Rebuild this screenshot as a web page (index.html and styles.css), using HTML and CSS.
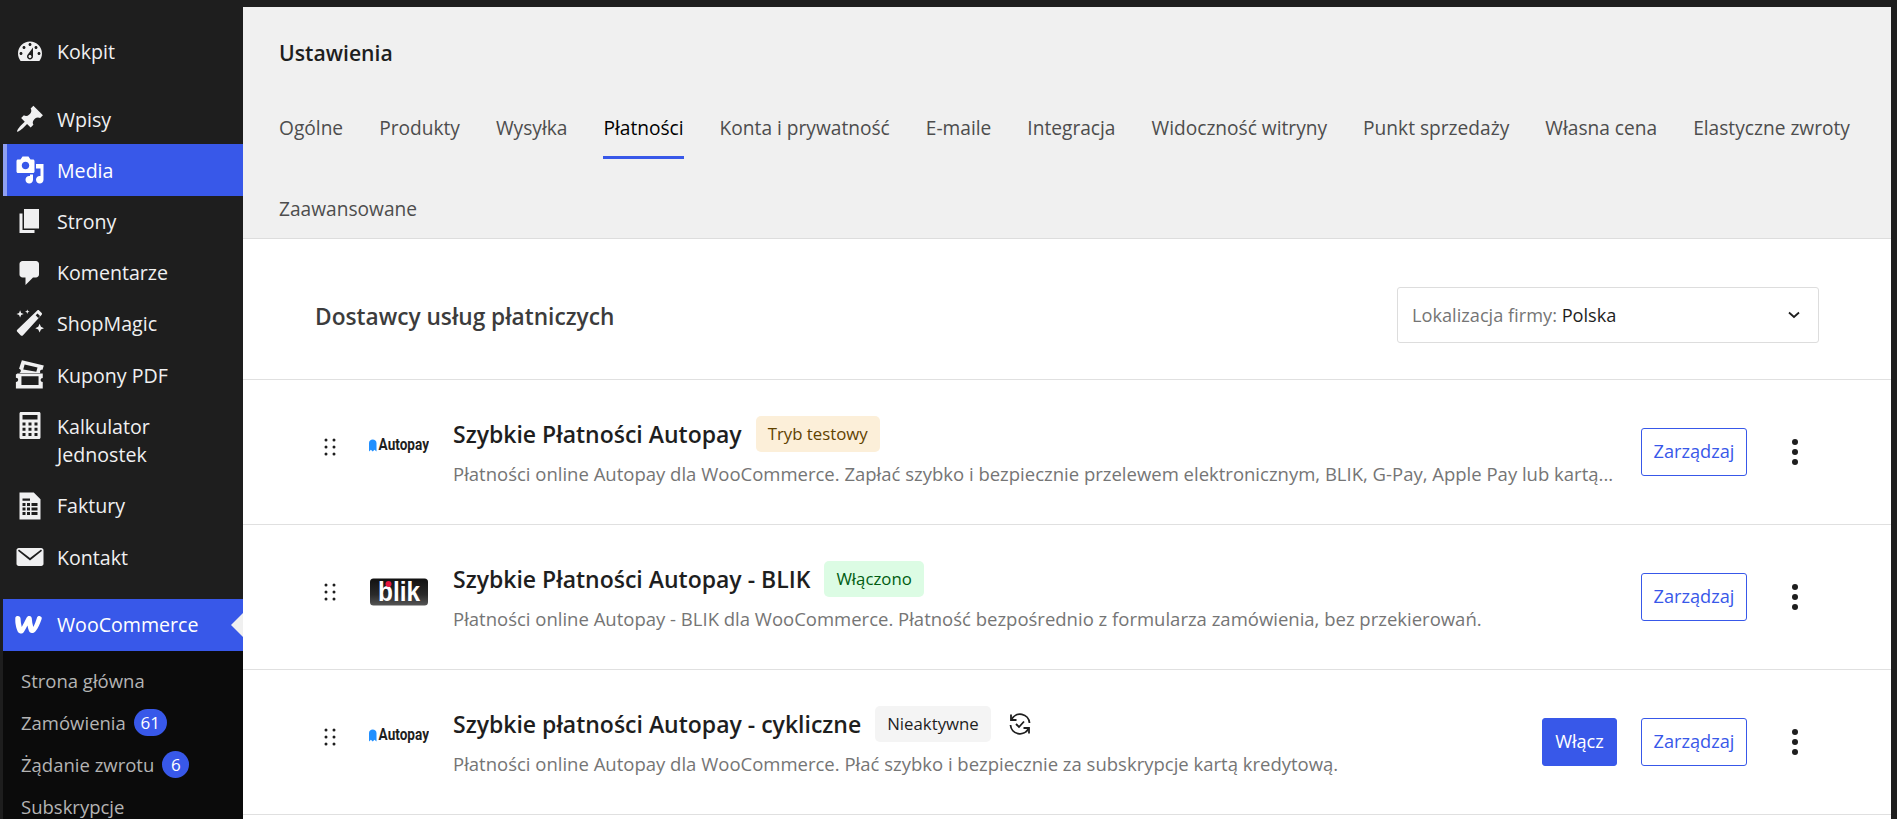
FILE: index.html
```html
<!DOCTYPE html>
<html lang="pl">
<head>
    <meta charset="UTF-8">
    <title>Ustawienia</title>
    <link rel="stylesheet" href="styles.css">
</head>
<body>
<div class="app">
    <div class="sidebar">
        <ul class="menu">
            <li class="item first">
                <svg class="ico" viewBox="0 0 20 20"><path d="M3.76 16h12.48c1.1-1.37 1.76-3.11 1.76-5 0-4.42-3.58-8-8-8s-8 3.58-8 8c0 1.89.66 3.63 1.76 5zM10 4c.55 0 1 .45 1 1s-.45 1-1 1-1-.45-1-1 .45-1 1-1zM6 6c.55 0 1 .45 1 1s-.45 1-1 1-1-.45-1-1 .45-1 1-1zm8 0c.55 0 1 .45 1 1s-.45 1-1 1-1-.45-1-1 .45-1 1-1zm-5.37 5.55L12 7v6c0 1.1-.9 2-2 2s-2-.9-2-2c0-.57.24-1.08.63-1.45zM4 10c.55 0 1 .45 1 1s-.45 1-1 1-1-.45-1-1 .45-1 1-1zm12 0c.55 0 1 .45 1 1s-.45 1-1 1-1-.45-1-1 .45-1 1-1zm-5 3c0-.55-.45-1-1-1s-1 .45-1 1 .45 1 1 1 1-.45 1-1z"/></svg>
                <span>Kokpit</span>
            </li>
            <li class="item sep">
                <svg class="ico" viewBox="0 0 20 20"><path d="M10.44 3.02l1.82-1.82 6.36 6.35-1.83 1.82c-1.05-.68-2.48-.57-3.41.36l-.75.75c-.92.93-1.04 2.35-.35 3.41l-1.83 1.82-2.41-2.41-2.8 2.79c-.42.42-3.38 2.71-3.8 2.29s1.86-3.39 2.28-3.81l2.79-2.79L4.1 9.36l1.83-1.82c1.05.69 2.48.57 3.4-.36l.75-.75c.93-.92 1.05-2.35.36-3.41z"/></svg>
                <span>Wpisy</span>
            </li>
            <li class="item active">
                <svg class="ico" viewBox="0 0 20 20"><path d="M13 11V4c0-.55-.45-1-1-1h-1.67L9 1H5L3.67 3H2c-.55 0-1 .45-1 1v7c0 .55.45 1 1 1h10c.55 0 1-.45 1-1zM7 4.5c1.38 0 2.5 1.12 2.5 2.5S8.38 9.5 7 9.5 4.5 8.38 4.5 7 5.62 4.5 7 4.5zM14 6h5v10.5c0 1.38-1.12 2.5-2.5 2.5S14 17.88 14 16.5s1.12-2.5 2.5-2.5c.17 0 .34.02.5.05V9h-3V6zm-4 8.05V13h2v3.5c0 1.38-1.12 2.5-2.5 2.5S7 17.88 7 16.5 8.12 14 9.5 14c.17 0 .34.02.5.05z"/></svg>
                <span>Media</span>
            </li>
            <li class="item">
                <svg class="ico" viewBox="0 0 20 20"><path d="M6 15V2h10v13H6zm-1 1h8v2H3V5h2v11z"/></svg>
                <span>Strony</span>
            </li>
            <li class="item">
                <svg class="ico" viewBox="0 0 20 20"><path d="M5 2h9c1.1 0 2 .9 2 2v7c0 1.1-.9 2-2 2h-2l-5 5v-5H5c-1.1 0-2-.9-2-2V4c0-1.1.9-2 2-2z"/></svg>
                <span>Komentarze</span>
            </li>
            <li class="item">
                <svg class="ico" viewBox="0 0 20 20"><path d="M15 .8c.4-.2.8-.1 1.100.2l1.700 1.700c.3.3.3.8 0 1.100L5.200 17.600c-.4.4-.9.4-1.300 0L1.500 15.200c-.4-.4-.4-.9 0-1.300zM13.800 4.200l1.700 1.800 1.200-1.300-1.700-1.700zM3.400.9l.7 1.700 1.700.7-1.700.7-.7 1.700-.7-1.700L1 3.300l1.700-.7zM8.200.3l.4 1.100 1.100.4-1.100.4-.4 1.100-.4-1.100-1.100-.4 1.100-.4zM16.400 9.900l.9 2 2 .9-2 .9-.9 2-.9-2-2-.9 2-.9z"/></svg>
                <span>ShopMagic</span>
            </li>
            <li class="item">
                <svg class="ico" viewBox="0 0 20 20"><path fill-rule="evenodd" d="M4.600.2l14.600 3.400-.9 3c-.8-.1-1.400.2-1.600 1-.1.4 0 .8.200 1.100H3c.6-.4.900-.9.900-1.500 0-.7-.5-1.200-1.200-1.300zM6.400 3l-.9 3.300 8.700 1.500.8-2.800zM1.600 9h16.900v3c-.9 0-1.400.5-1.400 1.300s.5 1.300 1.400 1.300V19H.6v-4.400c1-.1 1.500-.6 1.500-1.400s-.5-1.300-1.500-1.300V9.600zM4.300 10.800v5.900h11.400v-5.900z"/></svg>
                <span>Kupony PDF</span>
            </li>
            <li class="item two-lines">
                <svg class="ico" viewBox="0 0 20 20"><path fill-rule="evenodd" d="M4 0h12c.6 0 1 .4 1 1v16c0 .6-.4 1-1 1H4c-.6 0-1-.4-1-1V1c0-.6.4-1 1-1zM5 2v3h10V2zM5 7v2h2V7zM9 7v2h2V7zM13 7v2h2V7zM5 10.500v2h2v-2zM9 10.500v2h2v-2zM13 10.500v2h2v-2zM5 14v2h2v-2zM9 14v2h2v-2zM13 14v2h2v-2z"/></svg>
                <span class="wrap">Kalkulator Jednostek</span>
            </li>
            <li class="item">
                <svg class="ico" viewBox="0 0 20 20"><path fill-rule="evenodd" d="M3 1h9.500L17 5.500V19H3zM5 5v1.500h5V5zM5 8v2h2V8zM8 8v2h2V8zM11 8v2h4V8zM5 11v2h2v-2zM8 11v2h2v-2zM11 11v2h4v-2zM5 14v2h2v-2zM8 14v2h2v-2zM11 14v2h4v-2z"/></svg>
                <span>Faktury</span>
            </li>
            <li class="item">
                <svg class="ico" viewBox="0 0 20 20"><path d="M19 14.500v-9c0-.83-.67-1.500-1.500-1.500H2.500C1.670 4 1 4.670 1 5.500v9c0 .83.67 1.500 1.500 1.500h15c.83 0 1.500-.67 1.500-1.500zM17.700 5.400c.33.33.15.67-.03.84L10 12.400 2.330 6.240c-.18-.17-.36-.51-.03-.84s.67-.17.95.07L10 10.600l6.750-5.130c.28-.24.62-.4.95-.07z"/></svg>
                <span>Kontakt</span>
            </li>
            <li class="item active woo sep">
                <svg class="ico" viewBox="0 0 20 20"><path d="M.2 5.300c.1-.9.800-1.300 1.700-1.300 1.100 0 1.700.6 1.800 1.700.1 1.900.3 3.900.8 5.700 1.100-2 2.100-4.300 3.200-6.300.5-.9 1.100-1.200 2-1.100.9.100 1.400.7 1.500 1.700.1 1.900.4 3.900 1 5.700.9-1.900 1.800-4.100 2.400-6.100.3-1 1-1.400 2.100-1.200 1 .2 1.400 1 1 2-1 2.900-2.300 5.800-4 8.100-.7.9-1.500 1.300-2.500 1.200-1-.1-1.700-.8-2-1.700-.4-1.100-.7-2.200-.9-3.400-.7 1.500-1.500 3-2.400 4.300-.7.9-1.400 1.200-2.400 1-1-.2-1.600-.9-1.900-1.800-1-2.400-1.400-5.500-1.400-6.500z"/></svg>
                <span>WooCommerce</span>
            </li>
        </ul>
        <ul class="submenu">
            <li>Strona główna</li>
            <li>Zamówienia <b class="count wide">61</b></li>
            <li>Żądanie zwrotu <b class="count">6</b></li>
            <li>Subskrypcje</li>
        </ul>
    </div>

    <div class="main">
        <div class="head">
            <h1>Ustawienia</h1>
            <div class="tabs">
                <a>Ogólne</a>
                <a>Produkty</a>
                <a>Wysyłka</a>
                <a class="current">Płatności</a>
                <a>Konta i prywatność</a>
                <a>E-maile</a>
                <a>Integracja</a>
                <a>Widoczność witryny</a>
                <a>Punkt sprzedaży</a>
                <a>Własna cena</a>
                <a>Elastyczne zwroty</a>
                <a>Zaawansowane</a>
            </div>
        </div>

        <div class="section-head">
            <h2>Dostawcy usług płatniczych</h2>
            <div class="select">
                <span class="select-label">Lokalizacja firmy: <em>Polska</em></span>
                <svg width="14" height="14" viewBox="0 0 14 14"><path d="M2 4.500l5 4.500 5-4.500" fill="none" stroke="#1e1e1e" stroke-width="1.800"/></svg>
            </div>
        </div>

        <div class="row">
            <svg class="handle" width="12" height="18" viewBox="0 0 12 18"><g fill="#1e1e1e"><circle cx="2" cy="2" r="1.500"/><circle cx="10" cy="2" r="1.500"/><circle cx="2" cy="9" r="1.500"/><circle cx="10" cy="9" r="1.500"/><circle cx="2" cy="16" r="1.500"/><circle cx="10" cy="16" r="1.500"/></g></svg>
            <svg class="logo" width="60" height="28" viewBox="0 0 60 28"><path d="M0 18.500V10c0-2.200 1.700-3.500 3.700-3.500S7.500 7.800 7.500 10v8.500l-2-1.800-1.800 1.800-1.800-1.800z" fill="#2290ff"/><text x="12" y="17.500" class="autopay" transform="scale(.8 1)">Autopay</text></svg>
            <div class="info">
                <div class="title"><h3>Szybkie Płatności Autopay</h3><span class="badge test">Tryb testowy</span></div>
                <p class="desc">Płatności online Autopay dla WooCommerce. Zapłać szybko i bezpiecznie przelewem elektronicznym, BLIK, G-Pay, Apple Pay lub kartą...</p>
            </div>
            <a class="btn">Zarządzaj</a>
            <svg class="more" width="8" height="28" viewBox="0 0 8 28"><g fill="#1e1e1e"><circle cx="4" cy="4" r="3"/><circle cx="4" cy="14" r="3"/><circle cx="4" cy="24" r="3"/></g></svg>
        </div>

        <div class="row">
            <svg class="handle" width="12" height="18" viewBox="0 0 12 18"><g fill="#1e1e1e"><circle cx="2" cy="2" r="1.500"/><circle cx="10" cy="2" r="1.500"/><circle cx="2" cy="9" r="1.500"/><circle cx="10" cy="9" r="1.500"/><circle cx="2" cy="16" r="1.500"/><circle cx="10" cy="16" r="1.500"/></g></svg>
            <svg class="logo" width="60" height="28" viewBox="0 0 60 28">
                <defs><linearGradient id="blikbg" x1="0" y1="0" x2="0" y2="1"><stop offset="0" stop-color="#111"/><stop offset="0.6" stop-color="#2a2a2a"/><stop offset="1" stop-color="#555"/></linearGradient></defs>
                <rect x="1" y="0.500" width="58" height="27" rx="3.500" fill="url(#blikbg)"/>
                <text x="9" y="23" class="blik" textLength="42" lengthAdjust="spacingAndGlyphs">blik</text>
                <circle cx="19.500" cy="6" r="3" fill="#e5173f"/>
            </svg>
            <div class="info">
                <div class="title"><h3>Szybkie Płatności Autopay - BLIK</h3><span class="badge on">Włączono</span></div>
                <p class="desc">Płatności online Autopay - BLIK dla WooCommerce. Płatność bezpośrednio z formularza zamówienia, bez przekierowań.</p>
            </div>
            <a class="btn">Zarządzaj</a>
            <svg class="more" width="8" height="28" viewBox="0 0 8 28"><g fill="#1e1e1e"><circle cx="4" cy="4" r="3"/><circle cx="4" cy="14" r="3"/><circle cx="4" cy="24" r="3"/></g></svg>
        </div>

        <div class="row">
            <svg class="handle" width="12" height="18" viewBox="0 0 12 18"><g fill="#1e1e1e"><circle cx="2" cy="2" r="1.500"/><circle cx="10" cy="2" r="1.500"/><circle cx="2" cy="9" r="1.500"/><circle cx="10" cy="9" r="1.500"/><circle cx="2" cy="16" r="1.500"/><circle cx="10" cy="16" r="1.500"/></g></svg>
            <svg class="logo" width="60" height="28" viewBox="0 0 60 28"><path d="M0 18.500V10c0-2.200 1.700-3.500 3.700-3.500S7.500 7.800 7.500 10v8.500l-2-1.800-1.800 1.800-1.800-1.800z" fill="#2290ff"/><text x="12" y="17.500" class="autopay" transform="scale(.8 1)">Autopay</text></svg>
            <div class="info">
                <div class="title">
                    <h3>Szybkie płatności Autopay - cykliczne</h3><span class="badge off">Nieaktywne</span>
                    <svg class="recur" width="24" height="24" viewBox="0 0 24 24" fill="none" stroke="#1e1e1e" stroke-width="1.800"><path d="M3.500 7.500A9.500 9.500 0 0 1 21.500 11"/><path d="M3 2.500V8h5.500"/><path d="M20.500 16.500A9.500 9.500 0 0 1 2.500 13"/><path d="M21 21.500V16h-5.500"/><path d="M8 12l3 3 5-5.500"/></svg>
                </div>
                <p class="desc">Płatności online Autopay dla WooCommerce. Płać szybko i bezpiecznie za subskrypcje kartą kredytową.</p>
            </div>
            <a class="btn primary">Włącz</a>
            <a class="btn">Zarządzaj</a>
            <svg class="more" width="8" height="28" viewBox="0 0 8 28"><g fill="#1e1e1e"><circle cx="4" cy="4" r="3"/><circle cx="4" cy="14" r="3"/><circle cx="4" cy="24" r="3"/></g></svg>
        </div>
    </div>
</div>
</body>
</html>
```

FILE: styles.css
```css
* {
    margin: 0;
    padding: 0;
    box-sizing: border-box;
}
html, body {
    height: 100%;
    overflow: hidden;
}
body {
    background-color: #1e1e1e;
    font-family: "Open Sans", "Noto Sans", sans-serif;
}
ul {
    list-style: none;
}
.app {
    display: flex;
    height: 819px;
    padding: 7px 6px 0 3px;
}

/* sidebar */
.sidebar {
    width: 240px;
    flex: none;
    display: flex;
    flex-direction: column;
    overflow: hidden;
}
.menu {
    padding-top: 19px;
}
.item {
    display: flex;
    align-items: flex-start;
    gap: 12px;
    position: relative;
    padding: 12.4px 12px 10.8px;
    font-size: 19.6px;
    line-height: 28px;
    color: #f0f0f1;
}
.item.first {
    margin-bottom: -1px;
}
.item.sep {
    margin-top: 17px;
}
.item.two-lines {
    margin-top: 0.5px;
}
.item .wrap {
    padding-right: 24px;
}
.ico {
    width: 30px;
    height: 30px;
    flex: none;
    margin: -1.5px 0 -0.5px;
    fill: #f0f0f1;
}
.item.active {
    background-color: #3858e9;
    color: #fff;
}
.item.active .ico {
    fill: #fff;
}
.item.active:not(.woo) {
    box-shadow: inset 4px 0 0 #8fa0f2;
}
.item.woo {
    padding: 12px;
}
.item.woo:after {
    content: "";
    position: absolute;
    right: 0;
    top: 14px;
    border: 12px solid transparent;
    border-left-width: 0;
    border-right-color: #f0f0f0;
}
.submenu {
    flex: 1;
    background-color: #0b0b0b;
    padding: 8.5px 0 0 18px;
    font-size: 18.5px;
    color: #b4b4b4;
}
.submenu li {
    display: flex;
    align-items: center;
    gap: 8px;
    height: 42px;
}
.count {
    width: 27px;
    height: 27px;
    border-radius: 14px;
    background-color: #3858e9;
    color: #fff;
    font-size: 17px;
    font-weight: 400;
    text-align: center;
    line-height: 27px;
}
.count.wide {
    width: 33px;
}

/* main */
.main {
    flex: 1;
    min-width: 0;
    background-color: #fff;
    overflow: hidden;
}
.head {
    height: 232px;
    padding: 32px 0 0 36px;
    background-color: #f0f0f0;
    border-bottom: 1px solid #ddd;
}
.head h1 {
    font-size: 21.2px;
    font-weight: 600;
    line-height: 28px;
    color: #1e1e1e;
}
.tabs {
    display: flex;
    flex-wrap: wrap;
    gap: 36px;
    margin-top: 47px;
}
.tabs a {
    padding-bottom: 14px;
    border-bottom: 3px solid transparent;
    font-size: 19.15px;
    font-weight: 500;
    line-height: 28px;
    color: #4d4d4d;
}
.tabs a.current {
    color: #000;
    border-bottom-color: #3858e9;
}
.section-head {
    display: flex;
    justify-content: space-between;
    align-items: center;
    height: 141px;
    padding: 12px 72px 0;
    border-bottom: 1px solid #e0e0e0;
}
.section-head h2 {
    margin-top: 3px;
    font-size: 22.7px;
    font-weight: 600;
    color: #3c3c3c;
}
.select {
    display: flex;
    justify-content: space-between;
    align-items: center;
    width: 422px;
    height: 56px;
    padding: 0 17px 0 14px;
    border: 1px solid #ddd;
    border-radius: 3px;
}
.select-label {
    font-size: 18.2px;
    color: #757575;
}
.select-label em {
    font-style: normal;
    color: #1e1e1e;
}

/* payment rows */
.row {
    display: flex;
    align-items: center;
    height: 145px;
    padding: 0 92px 0 81px;
    border-bottom: 1px solid #e0e0e0;
}
.handle {
    flex: none;
    margin-bottom: 11px;
}
.logo {
    flex: none;
    margin: 0 24px 11px 33px;
}
.autopay {
    font-family: Roboto, sans-serif;
    font-size: 17px;
    font-weight: 700;
    fill: #1e1e1e;
}
.blik {
    font-family: "Liberation Sans", sans-serif;
    font-size: 27px;
    font-weight: 700;
    fill: #fff;
}
.info {
    flex: 1;
    min-width: 0;
    margin-right: 12px;
}
.title {
    display: flex;
    align-items: center;
    gap: 14px;
    height: 36px;
    margin-bottom: 8px;
}
.title h3 {
    font-size: 23px;
    font-weight: 600;
    color: #1e1e1e;
    white-space: nowrap;
}
.badge {
    height: 36px;
    padding: 0 12px;
    border-radius: 5px;
    font-size: 16.8px;
    line-height: 36px;
    white-space: nowrap;
}
.badge.test {
    background-color: #fcefd9;
    color: #614200;
}
.badge.on {
    background-color: #dcfce4;
    color: #005c12;
}
.badge.off {
    background-color: #f4f4f4;
    color: #1e1e1e;
}
.recur {
    margin-left: 3px;
}
.desc {
    font-size: 18.5px;
    line-height: 28px;
    color: #757575;
    white-space: nowrap;
}
.btn {
    flex: none;
    width: 106px;
    height: 48px;
    border: 1.5px solid #3858e9;
    border-radius: 3px;
    font-size: 18.2px;
    line-height: 45px;
    text-align: center;
    color: #3858e9;
}
.btn.primary {
    width: 75px;
    margin-right: 24px;
    background-color: #3858e9;
    color: #fff;
}
.more {
    flex: none;
    margin-left: 44px;
}
```
